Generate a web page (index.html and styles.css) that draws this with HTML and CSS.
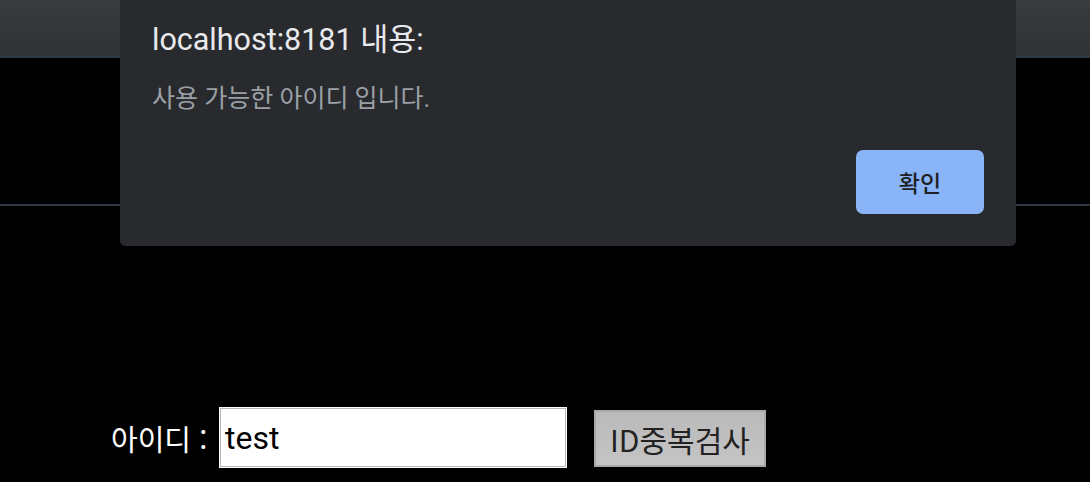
FILE: index.html
```html
<!DOCTYPE html>
<html lang="ko">
<head>
<meta charset="utf-8">
<link rel="stylesheet" href="styles.css">
</head>
<body>
<div class="page">
  <div class="topbar"></div>
  <div class="band"></div>
  <div class="form-row">
    <label class="label" for="uid">아이디 :</label>
    <input class="input" id="uid" type="text" value="test">
    <button class="check-btn" type="button">ID중복검사</button>
  </div>
</div>
<div class="dialog">
  <div class="dialog-title">localhost:8181 내용:</div>
  <div class="dialog-msg">사용 가능한 아이디 입니다.</div>
  <div class="dialog-actions">
    <button class="ok-btn" type="button">확인</button>
  </div>
</div>
</body>
</html>
```
FILE: styles.css
```css
html, body {
  margin: 0;
  padding: 0;
  background: #000;
  width: 1090px;
  height: 482px;
  overflow: hidden;
}
.page {
  display: flex;
  flex-direction: column;
}
.topbar {
  height: 56px;
  background: linear-gradient(#383c40, #2f3336);
  border-bottom: 2px solid #2c3846;
}
.band {
  height: 146px;
  border-bottom: 2px solid #2e3642;
}
.form-row {
  display: flex;
  align-items: flex-end;
  padding: 202px 0 0 111px;
}
.label {
  align-self: center;
  flex: 0 0 109px;
  white-space: nowrap;
  color: #fff;
  font-family: "Noto Sans CJK KR", sans-serif;
  font-size: 29px;
  letter-spacing: 0;
}
.input {
  width: 346px;
  height: 59px;
  box-sizing: border-box;
  border: 1px solid #b8b8b8;
  box-shadow: 0 0 0 1px #fff;
  background: #fff;
  padding: 0 4px;
  font-family: Roboto, "Liberation Sans", sans-serif;
  font-size: 32px;
  color: #000;
  margin-right: 28px;
  outline: none;
}
.check-btn {
  width: 172px;
  height: 57px;
  box-sizing: border-box;
  border: 2px solid #a8a8a8;
  background: linear-gradient(#bababa, #c4c4c4);
  font-family: "Noto Sans CJK KR", sans-serif;
  font-size: 30px;
  color: #222;
  padding: 0;
}
.dialog {
  position: absolute;
  left: 120px;
  top: 0;
  width: 896px;
  height: 246px;
  box-sizing: border-box;
  background: #292a2e;
  border-radius: 0 0 5px 5px;
  padding: 22px 32px 0 32px;
  font-family: Roboto, "Noto Sans CJK KR", sans-serif;
}
.dialog-title {
  color: #e8eaed;
  font-size: 30.5px;
  line-height: 36px;
}
.dialog-msg {
  color: #9aa0a6;
  font-size: 25px;
  line-height: 34px;
  margin-top: 24px;
}
.dialog-actions {
  display: flex;
  justify-content: flex-end;
  margin-top: 34px;
}
.ok-btn {
  width: 128px;
  height: 64px;
  border: none;
  border-radius: 7px;
  background: #8ab4f8;
  color: #202124;
  font-family: "Noto Sans CJK KR", sans-serif;
  font-size: 23px;
  font-weight: 500;
}
```
